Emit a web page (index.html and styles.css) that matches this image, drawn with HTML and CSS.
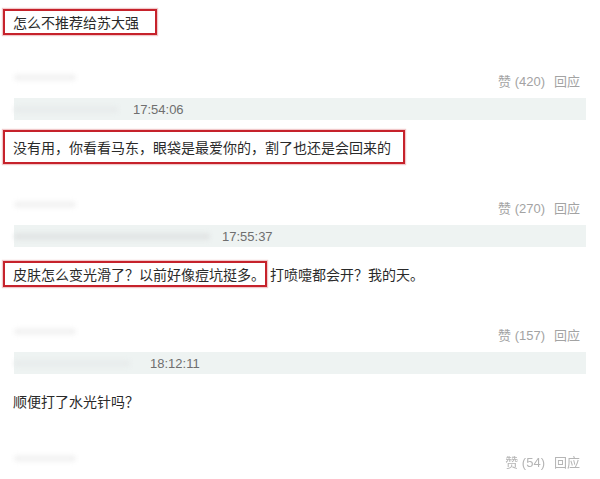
FILE: index.html
```html
<!DOCTYPE html>
<html lang="zh-CN">
<head>
    <meta charset="UTF-8">
    <meta name="viewport" content="width=device-width, initial-scale=1.0">
    <title>评论</title>
    <link rel="stylesheet" href="styles.css">
</head>
<body>
    <div class="thread">
        <div class="post">
            <div class="post-text">
                <span class="mark">怎么不推荐给苏大强</span>
            </div>
            <div class="post-meta">
                <span class="user"><i class="blur blur-name"></i></span>
                <span class="actions">赞 (420)<span class="reply">回应</span></span>
            </div>
            <div class="post-time">
                <i class="blur blur-a"></i>17:54:06
            </div>
        </div>

        <div class="post">
            <div class="post-text">
                <span class="mark mark-tall">没有用，你看看马东，眼袋是最爱你的，割了也还是会回来的</span>
            </div>
            <div class="post-meta">
                <span class="user"><i class="blur blur-name"></i></span>
                <span class="actions">赞 (270)<span class="reply">回应</span></span>
            </div>
            <div class="post-time">
                <i class="blur blur-b"></i>17:55:37
            </div>
        </div>

        <div class="post">
            <div class="post-text">
                <span class="mark mark-tight">皮肤怎么变光滑了？以前好像痘坑挺多。</span><span class="rest">打喷嚏都会开？我的天。</span>
            </div>
            <div class="post-meta">
                <span class="user"><i class="blur blur-name"></i></span>
                <span class="actions">赞 (157)<span class="reply">回应</span></span>
            </div>
            <div class="post-time">
                <i class="blur blur-c"></i>18:12:11
            </div>
        </div>

        <div class="post">
            <div class="post-text">
                <span class="plain">顺便打了水光针吗？</span>
            </div>
            <div class="post-meta faded">
                <span class="user"><i class="blur blur-name"></i></span>
                <span class="actions">赞 (54)<span class="reply">回应</span></span>
            </div>
        </div>
    </div>
</body>
</html>
```

FILE: styles.css
```css
:root {
    --text-color: #2a2a2a;
    --meta-color: #a3a3a3;
    --time-color: #6f6f6f;
    --bar-bg: #eef3f2;
    --mark-color: #c6222b;
}

body {
    margin: 0;
    background: #ffffff;
    color: var(--text-color);
    font-family: "Liberation Sans", "Noto Sans CJK SC", sans-serif;
}

.thread {
    padding: 4px 14px 0 3px;
}

.post {
    margin-bottom: 9px;
}

.post-text {
    height: 36px;
    display: flex;
    align-items: center;
    font-family: "Noto Sans CJK SC", sans-serif;
    font-size: 14px;
    line-height: 22px;
    white-space: nowrap;
}

.mark {
    border: 2px solid var(--mark-color);
    box-shadow: 0 0 1px 1px rgba(198, 34, 43, 0.25);
    padding: 0 16px 0 8px;
}

.mark-tall {
    padding: 4px 12px 4px 8px;
}

.mark-tight {
    padding-right: 0;
}

.rest {
    margin-left: 3px;
}

.plain {
    padding-left: 10px;
}

.post-meta {
    margin: 32px 0 0 11px;
    height: 20px;
    display: flex;
    justify-content: space-between;
    align-items: center;
    padding-right: 6px;
    font-size: 13px;
    color: var(--meta-color);
}

/* first row sits a little lower in the shot */
.post:first-child .post-meta {
    margin-top: 30px;
}

.post-meta.faded .actions {
    color: #b5b5b5;
    filter: blur(0.4px);
}

.reply {
    margin-left: 9px;
}

.user {
    display: flex;
    align-items: center;
}

.post-time {
    margin: 8px 0 0 11px;
    height: 22px;
    display: flex;
    align-items: center;
    background: var(--bar-bg);
    font-size: 13px;
    color: var(--time-color);
}

.blur {
    display: inline-block;
    height: 7px;
    border-radius: 3px;
    filter: blur(2px);
}

.blur-name {
    width: 62px;
    margin-top: -6px;
    background: #f3f3f3;
}

.blur-a {
    width: 104px;
    margin: 0 15px 0 0;
    background: #e8ecec;
}

.blur-b {
    width: 196px;
    margin: 0 12px 0 0;
    background: #e2e5e5;
}

.blur-c {
    width: 116px;
    margin: 0 20px 0 0;
    background: #e8ecec;
}
```
